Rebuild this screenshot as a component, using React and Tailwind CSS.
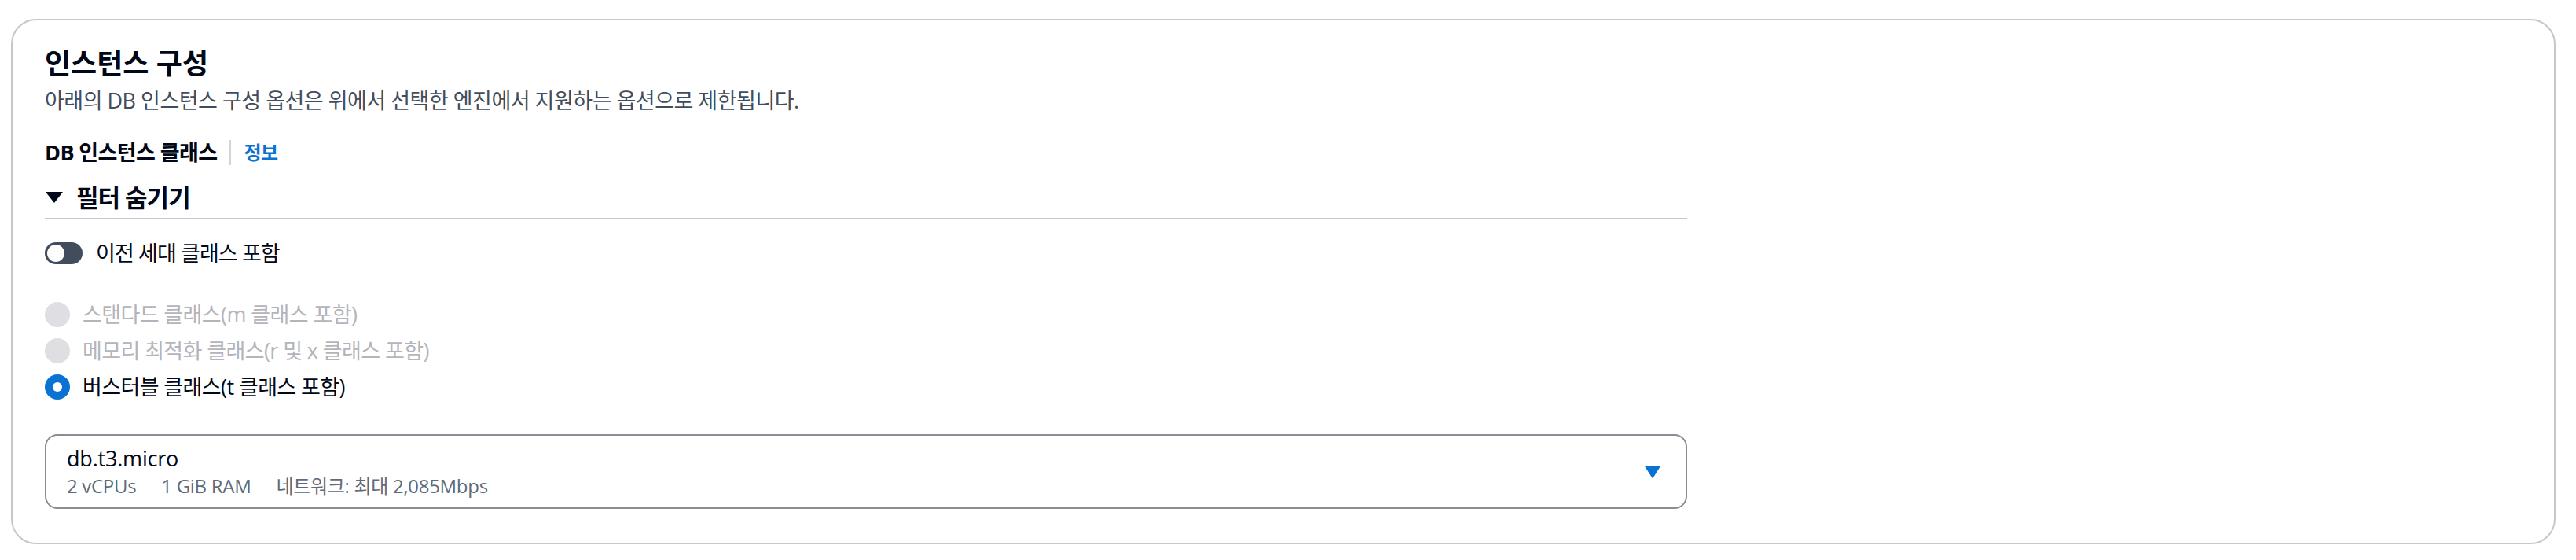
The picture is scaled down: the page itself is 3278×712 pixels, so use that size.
import React from "react";

const FONT = { fontFamily: '"Open Sans", "Noto Sans CJK KR", sans-serif' };

function Radio({ state, label }) {
  if (state === "checked") {
    return (
      <div className="flex items-center h-[46px]">
        <span className="w-[32px] h-[32px] rounded-full bg-[#0972d3] flex items-center justify-center shrink-0">
          <span className="w-[12px] h-[12px] rounded-full bg-white" />
        </span>
        <span className="ml-[16px] text-[27px] tracking-[-0.6px] leading-[46px] text-[#000716]">{label}</span>
      </div>
    );
  }
  return (
    <div className="flex items-center h-[46px]">
      <span className="w-[32px] h-[32px] rounded-full bg-[#dedee3] shrink-0" />
      <span className="ml-[16px] text-[27px] tracking-[-0.6px] leading-[46px] text-[#b4b4bb]">{label}</span>
    </div>
  );
}

export default function App() {
  return (
    <div className="bg-white w-[3278px] h-[712px] pt-[24px] pl-[14px] pr-[26px]" style={FONT}>
      <div className="border-2 border-[#c6c6cd] rounded-[32px] h-[668px] pl-[41px] pt-[33px]">
        <div className="w-[2090px]">
          <h2 className="text-[36px] leading-[44px] font-bold text-[#000716]">인스턴스 구성</h2>
          <p className="mt-[9px] text-[27px] tracking-[-0.5px] leading-[32px] text-[#414d5c]">
            아래의 DB 인스턴스 구성 옵션은 위에서 선택한 엔진에서 지원하는 옵션으로 제한됩니다.
          </p>

          <div className="mt-[34px] flex items-center h-[32px]">
            <span className="text-[27px] tracking-[-0.6px] leading-[32px] font-bold text-[#000716]">DB 인스턴스 클래스</span>
            <span className="ml-[16px] w-[2px] h-[32px] bg-[#d1d5db]" />
            <span className="ml-[16px] text-[24px] tracking-[-0.5px] leading-[32px] font-bold text-[#0972d3]">정보</span>
          </div>

          <div className="mt-[21px] pb-[6px] border-b-2 border-[#c6c6cd]">
            <div className="flex items-center h-[40px]">
              <svg width="24" height="16" viewBox="0 0 24 16" className="shrink-0">
                <path d="M1 1 H23 L12 15 Z" fill="#000716" />
              </svg>
              <span className="ml-[16px] text-[31px] tracking-[-1px] leading-[40px] font-bold text-[#000716]">필터 숨기기</span>
            </div>
          </div>

          <div className="mt-[27px] flex items-center h-[32px]">
            <span className="relative w-[48px] h-[28px] rounded-full bg-[#414d5c] shrink-0">
              <span className="absolute left-[3px] top-[3px] w-[22px] h-[22px] rounded-full bg-white" />
            </span>
            <span className="ml-[17px] text-[27px] tracking-[-0.9px] leading-[32px] text-[#000716]">이전 세대 클래스 포함</span>
          </div>

          <div className="mt-[39px] flex flex-col">
            <Radio state="disabled" label="스탠다드 클래스(m 클래스 포함)" />
            <Radio state="disabled" label="메모리 최적화 클래스(r 및 x 클래스 포함)" />
            <Radio state="checked" label="버스터블 클래스(t 클래스 포함)" />
          </div>

          <div className="mt-[37px] border-2 border-[#8c8c94] rounded-[16px] h-[95px] pl-[26px] pr-[32px] flex items-center">
            <div className="flex-1">
              <div className="text-[27px] tracking-[-0.2px] leading-[34px] text-[#000716]">db.t3.micro</div>
              <div className="mt-[3px] flex text-[24px] tracking-[-0.3px] leading-[30px] text-[#5f6b7a]">
                <span>2 vCPUs</span>
                <span className="ml-[32px]">1 GiB RAM</span>
                <span className="ml-[32px]">네트워크: 최대 2,085Mbps</span>
              </div>
            </div>
            <svg width="20" height="16" viewBox="0 0 20 16" className="shrink-0">
              <path d="M1 1 H19 L10 15 Z" fill="#0972d3" stroke="#0972d3" strokeWidth="1.5" strokeLinejoin="round" />
            </svg>
          </div>
        </div>
      </div>
    </div>
  );
}
